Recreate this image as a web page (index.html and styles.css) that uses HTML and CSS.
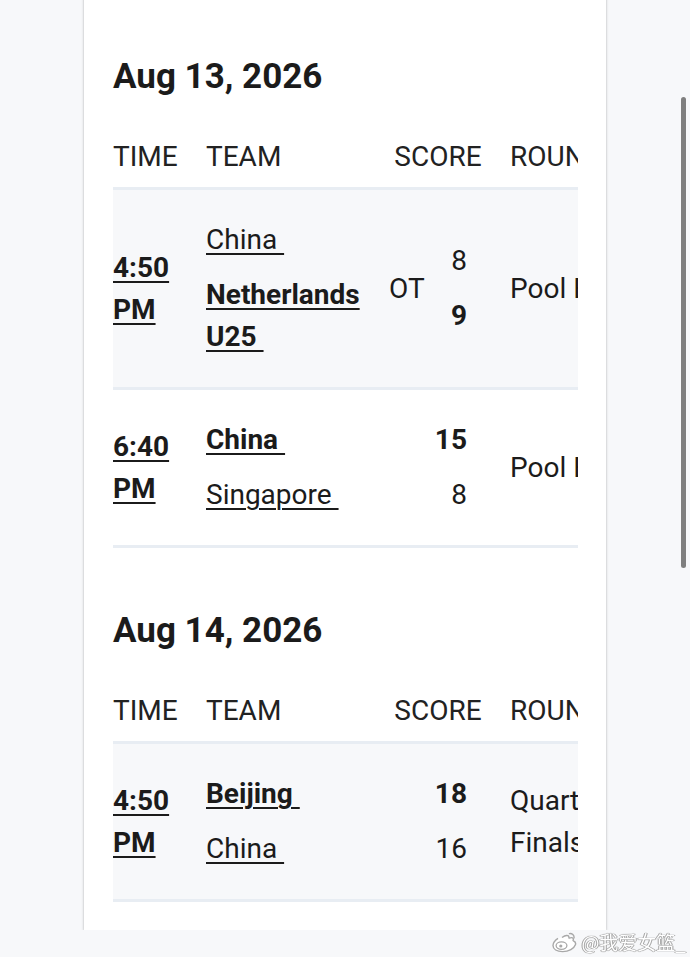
FILE: index.html
```html
<!DOCTYPE html>
<html lang="en">
<head>
    <meta charset="UTF-8">
    <meta name="viewport" content="width=device-width, initial-scale=1.0">
    <title>Schedule</title>
    <link rel="stylesheet" href="styles.css">
</head>
<body>
    <div class="card">
        <section class="day">
            <h2>Aug 13, 2026</h2>
            <div class="table-wrap">
                <table class="games">
                    <colgroup>
                        <col class="c-time">
                        <col class="c-team">
                        <col class="c-score">
                        <col class="c-round">
                    </colgroup>
                    <thead>
                        <tr>
                            <th>TIME</th>
                            <th>TEAM</th>
                            <th class="th-score">SCORE</th>
                            <th class="th-round">ROUND</th>
                        </tr>
                    </thead>
                    <tbody>
                        <tr class="shade">
                            <td class="time"><a href="#">4:50 PM</a></td>
                            <td class="teams">
                                <div><a href="#">China&nbsp;</a></div>
                                <div class="win"><a href="#">Netherlands U25&nbsp;</a></div>
                            </td>
                            <td class="score">
                                <span class="ot">OT</span>
                                <div class="pts">
                                    <div>8</div>
                                    <div class="win">9</div>
                                </div>
                            </td>
                            <td class="round">Pool B</td>
                        </tr>
                        <tr>
                            <td class="time"><a href="#">6:40 PM</a></td>
                            <td class="teams">
                                <div class="win"><a href="#">China&nbsp;</a></div>
                                <div><a href="#">Singapore&nbsp;</a></div>
                            </td>
                            <td class="score">
                                <span class="ot"></span>
                                <div class="pts">
                                    <div class="win">15</div>
                                    <div>8</div>
                                </div>
                            </td>
                            <td class="round">Pool B</td>
                        </tr>
                    </tbody>
                </table>
            </div>
        </section>

        <section class="day">
            <h2>Aug 14, 2026</h2>
            <div class="table-wrap">
                <table class="games">
                    <colgroup>
                        <col class="c-time">
                        <col class="c-team">
                        <col class="c-score">
                        <col class="c-round">
                    </colgroup>
                    <thead>
                        <tr>
                            <th>TIME</th>
                            <th>TEAM</th>
                            <th class="th-score">SCORE</th>
                            <th class="th-round">ROUND</th>
                        </tr>
                    </thead>
                    <tbody>
                        <tr class="shade">
                            <td class="time"><a href="#">4:50 PM</a></td>
                            <td class="teams">
                                <div class="win"><a href="#">Beijing&nbsp;</a></div>
                                <div><a href="#">China&nbsp;</a></div>
                            </td>
                            <td class="score">
                                <span class="ot"></span>
                                <div class="pts">
                                    <div class="win">18</div>
                                    <div>16</div>
                                </div>
                            </td>
                            <td class="round">Quarter Finals</td>
                        </tr>
                    </tbody>
                </table>
            </div>
        </section>
    </div>

    <div class="scrollbar"></div>

    <div class="watermark">
        <svg class="wb-logo" width="26" height="22" viewBox="0 0 26 22">
            <path d="M11 6.5c3.6-2.4 6.6-2.6 6.9-0.6 0.1 0.7-0.2 1.3 0.5 1.2 2.5-0.9 4.3-0.4 3.9 1.6-0.1 0.5-0.6 0.9 0.1 1.2 2 0.8 2.6 2.2 2 3.9-1.3 3.7-6.6 6.8-12.800 6.8C5.9 20.6 2 18.2 2 14.6c0-2.4 1.9-5.2 5-7.2" fill="#fff" stroke="#a8a8a8" stroke-width="1.4"/>
            <ellipse cx="10.5" cy="14.6" rx="5.4" ry="3.8" fill="#fff" stroke="#a8a8a8" stroke-width="1.3"/>
            <circle cx="9.8" cy="15" r="1.6" fill="#a8a8a8"/>
            <path d="M18.5 2.6c2.6-0.4 4.8 1.6 4.6 4.3" fill="none" stroke="#a8a8a8" stroke-width="1.4" stroke-linecap="round"/>
        </svg>
        <span class="wb-name">@我爱女篮_</span>
    </div>
</body>
</html>
```

FILE: styles.css
```css
* {
    box-sizing: border-box;
}
body {
    margin: 0;
    padding: 0;
    background: #f7f8fa;
    font-family: Roboto, "Noto Sans", Arial, sans-serif;
    color: #1b1b1b;
    overflow: hidden;
}
.card {
    width: 522px;
    margin: -20px auto 0;
    padding: 75px 28px 28px 29px;
    background: #ffffff;
    box-shadow: 0 2px 3px rgba(0, 0, 0, 0.18), 0 0 2px rgba(0, 0, 0, 0.14);
}
.day + .day {
    margin-top: 61px;
}
.day h2 {
    margin: 0 0 28px;
    font-size: 35px;
    line-height: 44px;
    font-weight: 700;
    color: #1b1b1b;
}
.table-wrap {
    width: 465px;
    overflow: hidden;
}
.games {
    width: 538px;
    table-layout: fixed;
    border-collapse: collapse;
    font-size: 28px;
    line-height: 42px;
}
.c-time { width: 93px; }
.c-team { width: 183px; }
.c-score { width: 98px; }
.c-round { width: 164px; }

.games th {
    padding: 9px 0;
    text-align: left;
    font-weight: 400;
    color: #222;
    white-space: nowrap;
    border-bottom: 3px solid #e8edf3;
}
.games th.th-score {
    text-align: center;
}
.games th.th-round {
    padding-left: 23px;
}
.games td {
    padding: 29px 0;
    vertical-align: middle;
    border-bottom: 3px solid #e8edf3;
}
.games tr.shade td {
    background: #f7f8fa;
}
.games a {
    color: inherit;
    text-decoration: underline;
    text-decoration-thickness: 2px;
    text-underline-offset: 4px;
}
td.time {
    padding-right: 16px;
    font-weight: 700;
}
td.teams {
    padding-right: 10px;
}
td.teams div + div {
    margin-top: 13px;
}
.win {
    font-weight: 700;
}
td.score {
    padding-right: 20px;
}
td.score .ot {
    float: left;
    line-height: 97px;
}
.pts {
    text-align: right;
}
.pts div + div {
    margin-top: 13px;
}
td.round {
    padding-left: 23px;
    padding-right: 30px;
}
.scrollbar {
    position: fixed;
    top: 97px;
    right: 4px;
    width: 5px;
    height: 471px;
    border-radius: 3px;
    background: #7f7f7f;
}
.watermark {
    position: fixed;
    right: 4px;
    bottom: 4px;
    display: flex;
    align-items: center;
    gap: 4px;
}
.wb-name {
    font-family: "Noto Sans CJK SC", sans-serif;
    font-size: 19px;
    line-height: 22px;
    color: #ffffff;
    text-shadow: 0 0 1px #8a8a8a, 0 0 1px #8a8a8a, 1px 0 0 #b0b0b0, -1px 0 0 #b0b0b0;
}
```
